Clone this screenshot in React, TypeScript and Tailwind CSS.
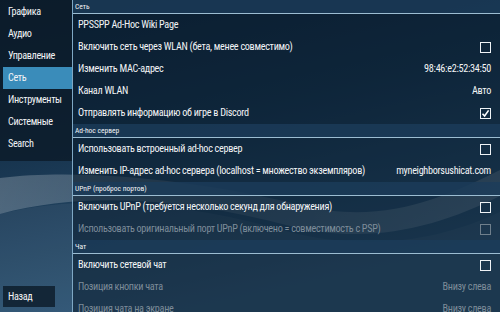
import * as React from "react";

type Row = {
  label: string;
  value?: string;
  check?: "off" | "on";
  disabled?: boolean;
};

type Section = { title: string; rows: Row[] };

const sections: Section[] = [
  {
    title: "Сеть",
    rows: [
      { label: "PPSSPP Ad-Hoc Wiki Page" },
      { label: "Включить сеть через WLAN (бета, менее совместимо)", check: "off" },
      { label: "Изменить MAC-адрес", value: "98:46:e2:52:34:50" },
      { label: "Канал WLAN", value: "Авто" },
      { label: "Отправлять информацию об игре в Discord", check: "on" },
    ],
  },
  {
    title: "Ad-hoc сервер",
    rows: [
      { label: "Использовать встроенный ad-hoc сервер", check: "off" },
      { label: "Изменить IP-адрес ad-hoc сервера (localhost = множество экземпляров)", value: "myneighborsushicat.com" },
    ],
  },
  {
    title: "UPnP (проброс портов)",
    rows: [
      { label: "Включить UPnP (требуется несколько секунд для обнаружения)", check: "off" },
      { label: "Использовать оригинальный порт UPnP (включено = совместимость с PSP)", check: "off", disabled: true },
    ],
  },
  {
    title: "Чат",
    rows: [
      { label: "Включить сетевой чат", check: "off" },
      { label: "Позиция кнопки чата", value: "Внизу слева", disabled: true },
      { label: "Позиция чата на экране", value: "Внизу слева", disabled: true },
    ],
  },
];

const tabs = ["Графика", "Аудио", "Управление", "Сеть", "Инструменты", "Системные", "Search"];

function CheckBox({ on, disabled }: { on?: boolean; disabled?: boolean }) {
  return (
    <div
      className={
        "flex h-[11px] w-[11px] items-center justify-center border-[1.5px] " +
        (disabled ? "border-[#6f7f8c]" : "border-[#eef2f5]")
      }
    >
      {on ? (
        <svg width="9" height="9" viewBox="0 0 9 9">
          <path d="M1.5 4.8 L3.6 7 L7.6 1.4" fill="none" stroke="#ffffff" strokeWidth="1.6" />
        </svg>
      ) : null}
    </div>
  );
}

function Background() {
  return (
    <svg className="absolute inset-0" width="500" height="312" viewBox="0 0 500 312" preserveAspectRatio="none">
      <defs>
        <linearGradient id="bg" x1="0" y1="0" x2="0.35" y2="1">
          <stop offset="0" stopColor="#0e2236" />
          <stop offset="0.45" stopColor="#17344e" />
          <stop offset="1" stopColor="#2d5576" />
        </linearGradient>
        <linearGradient id="wave" x1="0" y1="0" x2="1" y2="0">
          <stop offset="0" stopColor="#ffffff" stopOpacity="0.22" />
          <stop offset="0.5" stopColor="#ffffff" stopOpacity="0.12" />
          <stop offset="1" stopColor="#ffffff" stopOpacity="0.2" />
        </linearGradient>
      </defs>
      <rect width="500" height="312" fill="url(#bg)" />
      <path d="M0 178 C80 168 200 180 300 205 C380 225 440 200 500 170 L500 196 C440 226 370 246 290 226 C190 200 90 190 0 214 Z" fill="url(#wave)" />
      <path d="M0 214 C90 192 190 204 290 232 C370 252 440 240 500 212 L500 312 L0 312 Z" fill="#ffffff" fillOpacity="0.05" />
    </svg>
  );
}

export default function App() {
  return (
    <div
      className="relative h-[312px] w-[500px] overflow-hidden text-[#f2f4f6]"
      style={{ fontFamily: "'Roboto Condensed', Roboto, 'Liberation Sans', sans-serif" }}
    >
      <Background />
      <div className="relative flex h-full">
        <div className="flex w-[72px] shrink-0 flex-col justify-between">
          <div className="flex flex-col bg-[#0b1a28]/80 py-[1px]">
            {tabs.map((t) => (
              <div
                key={t}
                className={
                  "ml-[3px] flex h-[22px] items-center pl-[5px] text-[10.2px] tracking-[-0.35px] " +
                  (t === "Сеть" ? "bg-[#3a8cba]" : "")
                }
              >
                {t}
              </div>
            ))}
            <div className="h-[5px]" />
          </div>
          <div className="mb-[5px] ml-[3px] flex h-[21px] w-[52px] items-center bg-[#0b1a28]/80 pl-[5px] text-[10.2px] tracking-[-0.35px]">
            Назад
          </div>
        </div>
        <div className="flex-1 border-l border-[#7fa8c4] bg-[#08192a]/55">
          {sections.map((s) => (
            <div key={s.title}>
              <div className="flex h-[14px] items-center border-b border-[#9cbdd2] bg-[#1b3c5a]/80 pl-[2px] text-[7.5px]">
                {s.title}
              </div>
              {s.rows.map((r) => (
                <div key={r.label} className="flex h-[22px] items-center justify-between pl-[5px] pr-[9px] text-[10.2px] tracking-[-0.3px]">
                  <span className={r.disabled ? "text-[#7d8c99]" : ""}>{r.label}</span>
                  {r.value ? <span className={r.disabled ? "text-[#7d8c99]" : ""}>{r.value}</span> : null}
                  {r.check ? <CheckBox on={r.check === "on"} disabled={r.disabled} /> : null}
                </div>
              ))}
            </div>
          ))}
        </div>
      </div>
    </div>
  );
}
